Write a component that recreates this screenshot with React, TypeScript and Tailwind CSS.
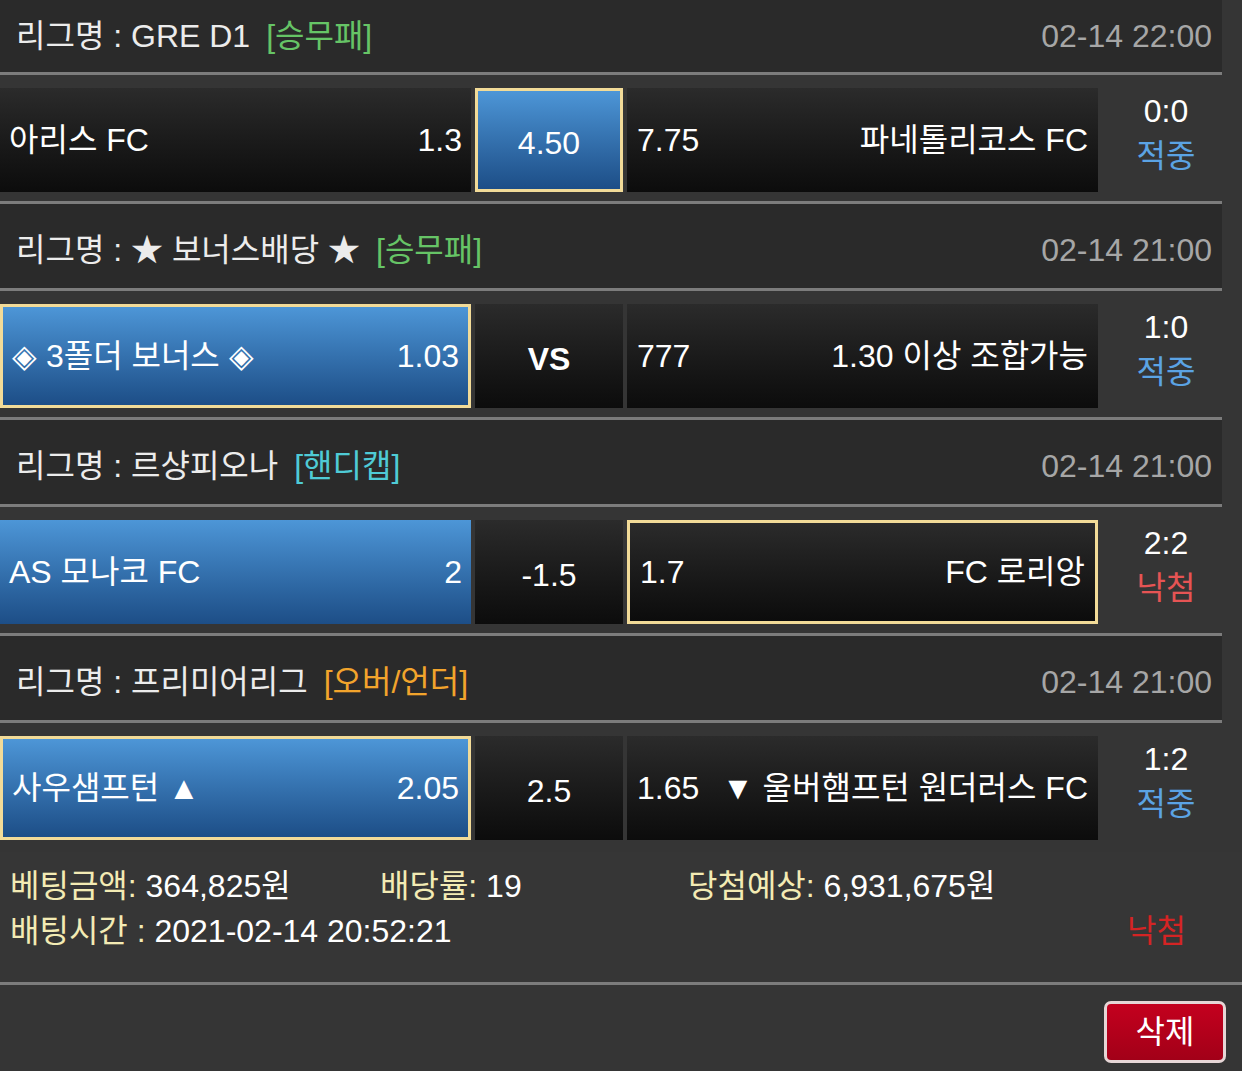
import React from 'react';

type Variant = 'dark' | 'darkSel' | 'blue' | 'blueSel';

const cellClass: Record<Variant, string> = {
  dark: 'bg-linear-to-b from-[#2b2b2b] to-[#0c0c0c]',
  darkSel: 'bg-linear-to-b from-[#2b2b2b] to-[#0c0c0c] border-[3px] border-[#f2db98]',
  blue: 'bg-linear-to-b from-[#4d96d7] to-[#1d4e87]',
  blueSel: 'bg-linear-to-b from-[#4d96d7] to-[#1d4e87] border-[3px] border-[#f2db98]',
};

type Side = { name: string; odds: string; v: Variant };

type Match = {
  league: string;
  tag: string;
  tagColor: string;
  date: string;
  home: Side;
  mid: { text: string; v: Variant; bold?: boolean };
  away: Side;
  score: string;
  result: string;
  resultColor: string;
};

const matches: Match[] = [
  {
    league: 'GRE D1',
    tag: '[승무패]',
    tagColor: 'text-[#66c466]',
    date: '02-14 22:00',
    home: { name: '아리스 FC', odds: '1.3', v: 'dark' },
    mid: { text: '4.50', v: 'blueSel' },
    away: { name: '파네톨리코스 FC', odds: '7.75', v: 'dark' },
    score: '0:0',
    result: '적중',
    resultColor: 'text-[#5ba3e4]',
  },
  {
    league: '★ 보너스배당 ★',
    tag: '[승무패]',
    tagColor: 'text-[#66c466]',
    date: '02-14 21:00',
    home: { name: '◈ 3폴더 보너스 ◈', odds: '1.03', v: 'blueSel' },
    mid: { text: 'VS', v: 'dark', bold: true },
    away: { name: '1.30 이상 조합가능', odds: '777', v: 'dark' },
    score: '1:0',
    result: '적중',
    resultColor: 'text-[#5ba3e4]',
  },
  {
    league: '르샹피오나',
    tag: '[핸디캡]',
    tagColor: 'text-[#4fcbd6]',
    date: '02-14 21:00',
    home: { name: 'AS 모나코 FC', odds: '2', v: 'blue' },
    mid: { text: '-1.5', v: 'dark' },
    away: { name: 'FC 로리앙', odds: '1.7', v: 'darkSel' },
    score: '2:2',
    result: '낙첨',
    resultColor: 'text-[#e65454]',
  },
  {
    league: '프리미어리그',
    tag: '[오버/언더]',
    tagColor: 'text-[#f2a42c]',
    date: '02-14 21:00',
    home: { name: '사우샘프턴 ▲', odds: '2.05', v: 'blueSel' },
    mid: { text: '2.5', v: 'dark' },
    away: { name: '▼ 울버햄프턴 원더러스 FC', odds: '1.65', v: 'dark' },
    score: '1:2',
    result: '적중',
    resultColor: 'text-[#5ba3e4]',
  },
];

function LeagueHeader({ m, first }: { m: Match; first: boolean }) {
  return (
    <div
      className={`flex items-center justify-between bg-[#2a2a2a] border-b-[3px] border-[#7c7c7c] pl-[16px] pr-[10px] ${
        first ? 'h-[75px]' : 'h-[87px] pt-[8px]'
      }`}
    >
      <div className="text-[#ececec] whitespace-nowrap">
        리그명 : {m.league}
        <span className={`ml-[16px] ${m.tagColor}`}>{m.tag}</span>
      </div>
      <div className="text-[#a6a6a6]">{m.date}</div>
    </div>
  );
}

function MatchRow({ m, last }: { m: Match; last: boolean }) {
  return (
    <div
      className={`flex bg-[#353535] pt-[13px] ${
        last ? 'pb-[12px]' : 'pb-[9px] border-b-[3px] border-[#7c7c7c]'
      }`}
    >
      <div
        className={`flex items-center justify-between w-[471px] h-[104px] px-[9px] text-white whitespace-nowrap ${cellClass[m.home.v]}`}
      >
        <span>{m.home.name}</span>
        <span>{m.home.odds}</span>
      </div>
      <div
        className={`flex items-center justify-center w-[148px] h-[104px] ml-[4px] pt-[6px] text-white ${
          m.mid.bold ? 'font-bold' : ''
        } ${cellClass[m.mid.v]}`}
      >
        {m.mid.text}
      </div>
      <div
        className={`flex items-center justify-between w-[471px] h-[104px] ml-[4px] px-[10px] text-white whitespace-nowrap ${cellClass[m.away.v]}`}
      >
        <span>{m.away.odds}</span>
        <span>{m.away.name}</span>
      </div>
      <div className="flex-1 flex flex-col items-center justify-center pl-[12px] pb-[12px] leading-[45px]">
        <span className="text-white">{m.score}</span>
        <span className={m.resultColor}>{m.result}</span>
      </div>
    </div>
  );
}

export default function App() {
  return (
    <div className="w-[1242px] min-h-[1071px] bg-[#353535] text-[32px] leading-none font-['Liberation_Sans','Noto_Sans_CJK_KR',sans-serif]">
      <div className="w-[1222px]">
        {matches.map((m, i) => (
          <div key={i}>
            <LeagueHeader m={m} first={i === 0} />
            <MatchRow m={m} last={i === matches.length - 1} />
          </div>
        ))}
      </div>

      {/* 배팅 정보 */}
      <div className="bg-[#363636] border-b-[3px] border-[#7c7c7c] pl-[10px] pt-[12px] pb-[28px] leading-[45px]">
        <div className="flex whitespace-nowrap">
          <div className="w-[370px]">
            <span className="text-[#f3ebb4]">베팅금액:</span>
            <span className="text-white"> 364,825원</span>
          </div>
          <div className="w-[308px]">
            <span className="text-[#f3ebb4]">배당률:</span>
            <span className="text-white"> 19</span>
          </div>
          <div>
            <span className="text-[#f3ebb4]">당첨예상:</span>
            <span className="text-white"> 6,931,675원</span>
          </div>
        </div>
        <div className="flex justify-between pr-[56px] whitespace-nowrap">
          <div>
            <span className="text-[#f3ebb4]">배팅시간 :</span>
            <span className="text-white"> 2021-02-14 20:52:21</span>
          </div>
          <span className="text-[#d42424]">낙첨</span>
        </div>
      </div>

      <div className="flex justify-end pt-[16px] pr-[16px] pb-[10px]">
        <button className="w-[122px] h-[62px] rounded-[7px] border-[3px] border-[#e6d6d6] bg-linear-to-b from-[#c4001e] to-[#a20018] text-white text-[32px]">
          삭제
        </button>
      </div>
    </div>
  );
}
